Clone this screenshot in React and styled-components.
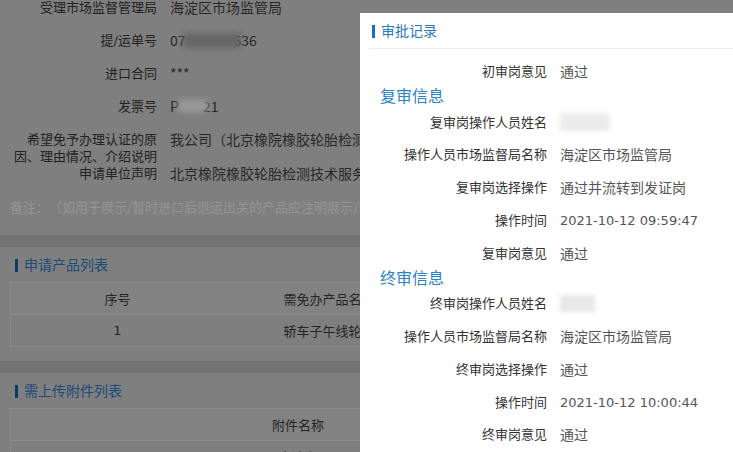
import React from "react";
import styled, { createGlobalStyle } from "styled-components";

const Global = createGlobalStyle`
  html, body { margin: 0; padding: 0; background: #737373; }
  body {
    font-family: "DejaVu Sans", "Noto Sans CJK SC", sans-serif;
    overflow: hidden;
    text-spacing-trim: space-all;
  }
`;

const CJK = `"Noto Sans CJK SC", "DejaVu Sans", sans-serif`;

const Page = styled.div`
  position: relative;
  width: 733px;
  height: 452px;
  overflow: hidden;
  background: #737373;
  font-size: 13px;
`;

const Backdrop = styled.div`
  display: flex;
  flex-direction: column;
  gap: 12px;
  margin-top: -9.5px;
`;

const Card = styled.section`
  background: #7f7f7f;
  padding: ${(p) => p.$pad || "10px 0 14px"};
  overflow: hidden;
`;

const FormRow = styled.div`
  display: grid;
  grid-template-columns: 147px 1fr;
  column-gap: 13px;
  align-items: ${(p) => (p.$top ? "start" : "center")};
  padding: ${(p) => (p.$noTop ? "0" : "8px")} 0 ${(p) => (p.$noBottom ? "0" : "8px")} 10px;
  line-height: 17px;
`;

const FormLabel = styled.div`
  text-align: right;
  color: #222;
`;

const FormValue = styled.div`
  color: #282828;
  font-size: 14px;
  font-family: ${CJK};
  white-space: nowrap;
  display: flex;
  align-items: center;
`;

const Smudge = styled.span`
  display: inline-block;
  width: ${(p) => p.$w}px;
  height: ${(p) => p.$h}px;
  background: ${(p) => p.$bg};
  filter: blur(${(p) => p.$blur || 3}px);
  margin: 0 ${(p) => p.$mr || 0}px 0 ${(p) => p.$ml || 0}px;
  position: relative;
  z-index: 1;
`;

const Note = styled.div`
  padding: 8px 0 20.5px 10px;
  line-height: 17px;
  color: #959595;
  white-space: nowrap;
  font-family: ${CJK};
`;

const CardTitle = styled.h3`
  margin: 0 0 8px 15px;
  display: flex;
  align-items: center;
  gap: 6px;
  font-size: 14px;
  font-weight: normal;
  line-height: 17px;
  color: #1b4b76;
  &::before {
    content: "";
    width: 3px;
    height: 13px;
    background: #0b3c69;
  }
`;

const Table = styled.table`
  margin-left: 10px;
  width: 1000px;
  border-collapse: collapse;
  table-layout: fixed;
  color: #252525;
  border-left: 1px solid #8a8a8a;
`;

const Th = styled.th`
  height: 31px;
  padding: 0;
  font-weight: normal;
  text-align: center;
  border-top: 1px solid #8a8a8a;
  border-bottom: 1px solid #8a8a8a;
  background: #828282;
  width: ${(p) => (p.$w ? `${p.$w}px` : "auto")};
`;

const Td = styled.td`
  height: 31px;
  padding: 0;
  text-align: center;
  border-bottom: 1px solid #8a8a8a;
`;

const Modal = styled.div`
  position: absolute;
  left: 360px;
  top: 13px;
  width: 400px;
  bottom: -30px;
  background: #fff;
  padding-left: 9px;
  box-sizing: border-box;
`;

const ModalHeader = styled.div`
  display: flex;
  align-items: center;
  gap: 6px;
  padding: 10px 0 8px 3px;
  border-bottom: 1px solid #ececec;
  font-size: 14px;
  line-height: 17px;
  color: #2a78bd;
  &::before {
    content: "";
    width: 3px;
    height: 13px;
    background: #1a6fb8;
  }
`;

const ModalBody = styled.div`
  padding-top: 6px;
`;

const InfoRow = styled.div`
  display: grid;
  grid-template-columns: 178px 1fr;
  column-gap: 13px;
  align-items: center;
  height: 32.75px;
  line-height: 17px;
`;

const InfoLabel = styled.div`
  text-align: right;
  color: #333;
`;

const InfoValue = styled.div`
  color: #555;
  font-size: 14px;
  font-family: ${CJK};
  white-space: nowrap;
  display: flex;
  align-items: center;
`;

const Stamp = styled.span`
  font-family: "DejaVu Sans", sans-serif;
  font-size: 13px;
`;

const SectionHeading = styled.div`
  height: 18px;
  line-height: 18px;
  font-size: 16px;
  padding-left: 11px;
  color: #2b82c4;
`;

const Row = ({ label, children }) => (
  <InfoRow>
    <InfoLabel>{label}</InfoLabel>
    <InfoValue>{children}</InfoValue>
  </InfoRow>
);

export default function App() {
  return (
    <>
      <Global />
      <Page>
        <Backdrop>
          <Card $pad="0">
            <FormRow>
              <FormLabel>受理市场监督管理局</FormLabel>
              <FormValue>海淀区市场监管局</FormValue>
            </FormRow>
            <FormRow>
              <FormLabel>提/运单号</FormLabel>
              <FormValue>
                07
                <Smudge $w={58} $h={15} $bg="#666" $ml={-3} $mr={-7} />
                636
              </FormValue>
            </FormRow>
            <FormRow>
              <FormLabel>进口合同</FormLabel>
              <FormValue>***</FormValue>
            </FormRow>
            <FormRow>
              <FormLabel>发票号</FormLabel>
              <FormValue>
                P
                <Smudge $w={30} $h={12} $bg="#9a9a9a" $ml={-1} $mr={-5} />
                21
              </FormValue>
            </FormRow>
            <FormRow $noBottom $top>
              <FormLabel>
                希望免予办理认证的原
                <br />
                因、理由情况、介绍说明
              </FormLabel>
              <FormValue>我公司（北京橡院橡胶轮胎检测技术服务有限公司）</FormValue>
            </FormRow>
            <FormRow $noTop>
              <FormLabel>申请单位声明</FormLabel>
              <FormValue>北京橡院橡胶轮胎检测技术服务有限公司承诺</FormValue>
            </FormRow>
            <Note>
              备注：（如用于展示/暂时进口后退运出关的产品应注明展示/暂时进口后退运出关的时间）
            </Note>
          </Card>

          <Card>
            <CardTitle>申请产品列表</CardTitle>
            <Table>
              <thead>
                <tr>
                  <Th $w={213}>序号</Th>
                  <Th $w={210}>需免办产品名称</Th>
                  <Th $w={200}>规格型号</Th>
                  <Th>数量</Th>
                </tr>
              </thead>
              <tbody>
                <tr>
                  <Td>1</Td>
                  <Td>轿车子午线轮胎</Td>
                  <Td>205/55R16</Td>
                  <Td>20</Td>
                </tr>
              </tbody>
            </Table>
          </Card>

          <Card>
            <CardTitle>需上传附件列表</CardTitle>
            <Table>
              <thead>
                <tr>
                  <Th $w={574}>附件名称</Th>
                  <Th>操作</Th>
                </tr>
              </thead>
              <tbody>
                <tr>
                  <Td>申请书</Td>
                  <Td>查看</Td>
                </tr>
              </tbody>
            </Table>
          </Card>
        </Backdrop>

        <Modal>
          <ModalHeader>审批记录</ModalHeader>
          <ModalBody>
            <Row label="初审岗意见">通过</Row>
            <SectionHeading>复审信息</SectionHeading>
            <Row label="复审岗操作人员姓名">
              <Smudge $w={50} $h={18} $bg="#ececec" $blur={2} />
            </Row>
            <Row label="操作人员市场监督局名称">海淀区市场监管局</Row>
            <Row label="复审岗选择操作">通过并流转到发证岗</Row>
            <Row label="操作时间">
              <Stamp>2021-10-12 09:59:47</Stamp>
            </Row>
            <Row label="复审岗意见">通过</Row>
            <SectionHeading>终审信息</SectionHeading>
            <Row label="终审岗操作人员姓名">
              <Smudge $w={35} $h={17} $bg="#e8e8e8" $blur={2} />
            </Row>
            <Row label="操作人员市场监督局名称">海淀区市场监管局</Row>
            <Row label="终审岗选择操作">通过</Row>
            <Row label="操作时间">
              <Stamp>2021-10-12 10:00:44</Stamp>
            </Row>
            <Row label="终审岗意见">通过</Row>
          </ModalBody>
        </Modal>
      </Page>
    </>
  );
}
